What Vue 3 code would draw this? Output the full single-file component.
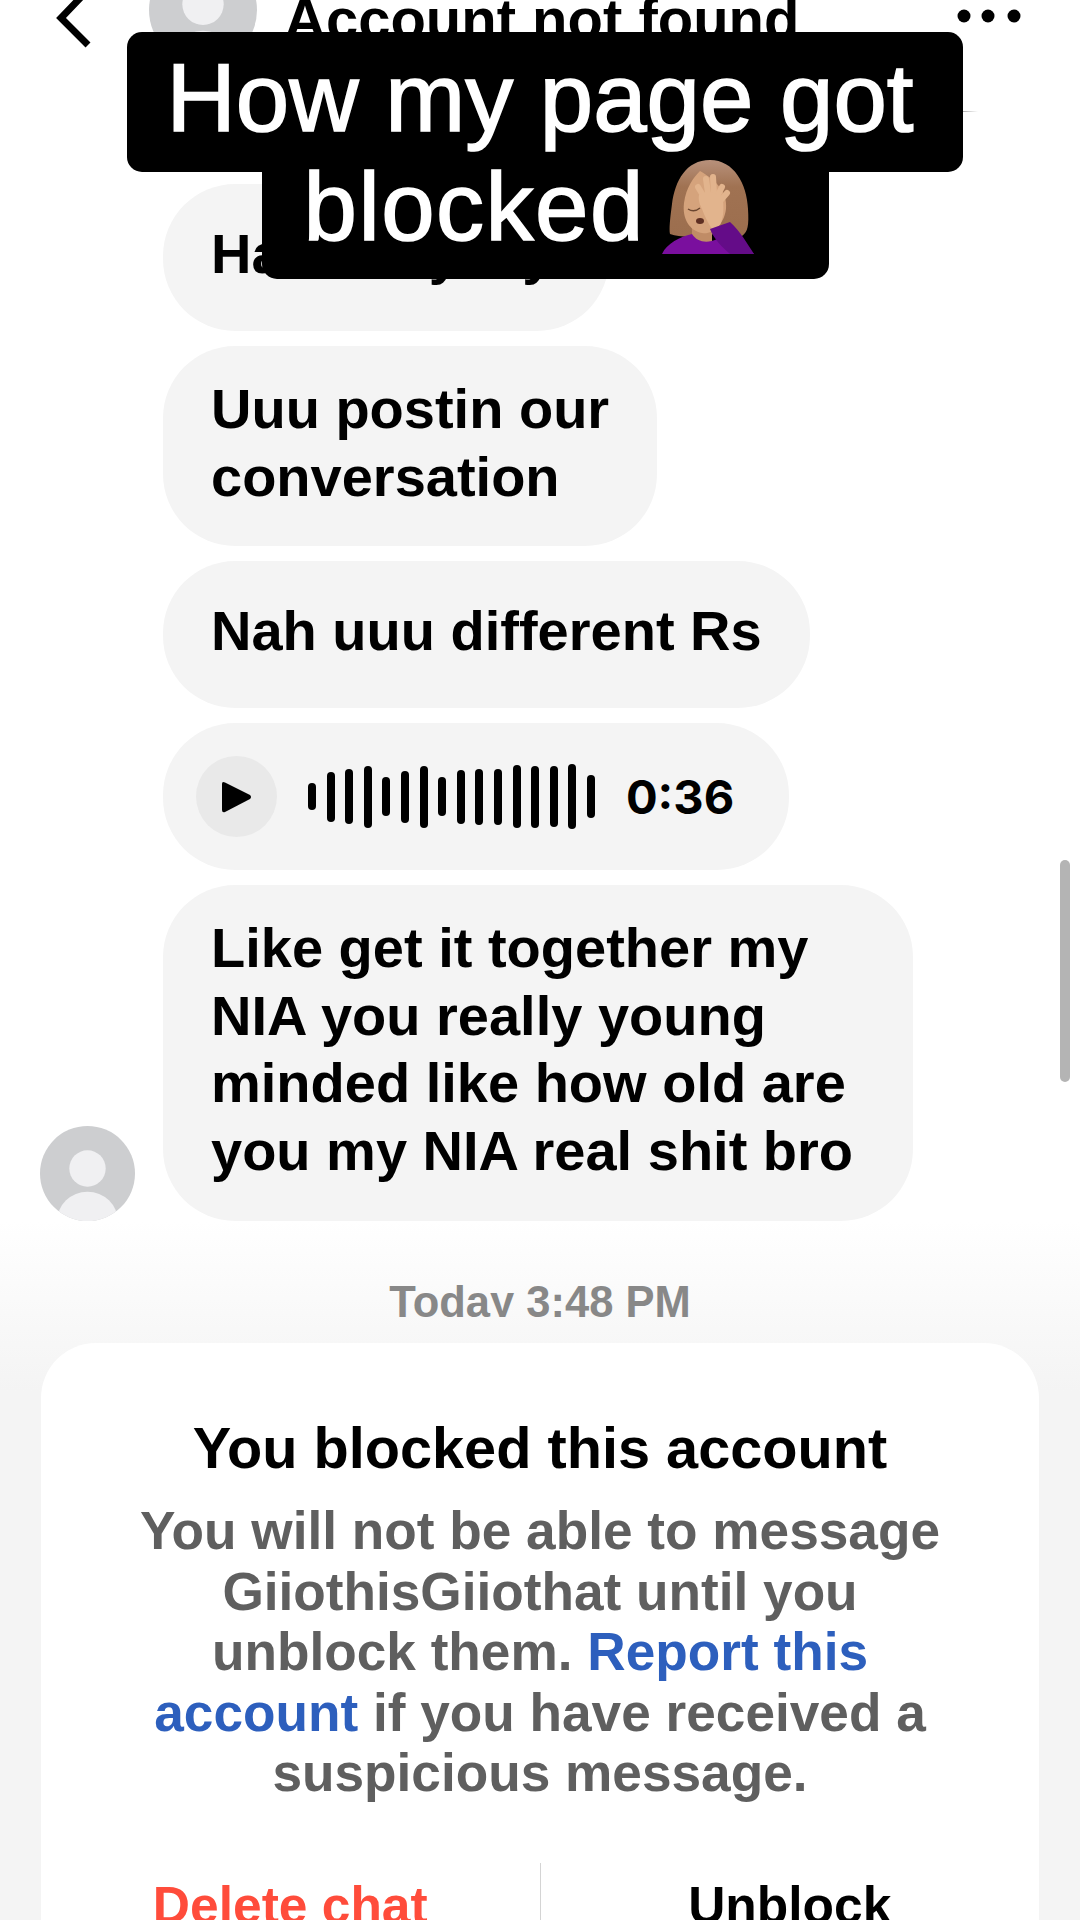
<template>
  <div class="screen">
    <header class="topbar">
      <svg class="back" width="50" height="60" viewBox="0 0 50 60">
        <path d="M37 -6 L14 18 L41 45" fill="none" stroke="#000" stroke-width="7" />
      </svg>
      <svg class="top-avatar" width="108" height="108" viewBox="0 0 94 94">
        <defs>
          <clipPath id="topClip"><circle cx="47" cy="47" r="47" /></clipPath>
        </defs>
        <g clip-path="url(#topClip)">
          <rect width="94" height="94" fill="#cdced0" />
          <circle cx="47" cy="42" r="18" fill="#f0f0f2" />
          <ellipse cx="47" cy="94" rx="30" ry="29" fill="#f0f0f2" />
        </g>
      </svg>
      <div class="account-name">Account not found</div>
      <svg class="more" width="70" height="20" viewBox="0 0 70 20">
        <circle cx="9" cy="10" r="6.5" />
        <circle cx="33" cy="10" r="6.5" />
        <circle cx="59" cy="10" r="6.5" />
      </svg>
      <div class="top-rule"></div>
    </header>

    <section class="thread">
      <div v-for="msg in messages" :key="msg.id" class="row">
        <div class="avatar-slot"></div>
        <div class="bubble" :class="msg.kind">
          <div v-for="line in msg.lines" :key="line">{{ line }}</div>
        </div>
      </div>

      <div class="row voice-row">
        <div class="avatar-slot"></div>
        <div class="bubble voice">
          <div class="play">
            <svg width="30" height="34" viewBox="0 0 30 34">
              <path d="M3 2.5 L28 15 Q30 17 28 19 L3 32 Q0 33 0 30 L0 4 Q0 1 3 2.5Z" />
            </svg>
          </div>
          <div class="wave">
            <span v-for="(h, i) in waveBars" :key="i" :style="{ height: h + 'px' }"></span>
          </div>
          <div class="duration">0:36</div>
        </div>
      </div>

      <div class="row">
        <div class="avatar-slot">
          <svg width="95" height="95" viewBox="0 0 94 94">
            <defs>
              <clipPath id="lastClip"><circle cx="47" cy="47" r="47" /></clipPath>
            </defs>
            <g clip-path="url(#lastClip)">
              <rect width="94" height="94" fill="#cdced0" />
              <circle cx="47" cy="42" r="18" fill="#f0f0f2" />
              <ellipse cx="47" cy="94" rx="30" ry="29" fill="#f0f0f2" />
            </g>
          </svg>
        </div>
        <div class="bubble last">
          <div v-for="line in lastLines" :key="line">{{ line }}</div>
        </div>
      </div>
    </section>

    <section class="footer">
      <div class="stamp">Today 3:48 PM</div>
      <div class="card">
        <div class="card-title">You blocked this account</div>
        <p class="card-body">
          You will not be able to message<br />
          GiiothisGiiothat until you<br />
          unblock them. <span class="link">Report this</span><br />
          <span class="link">account</span> if you have received a<br />
          suspicious message.
        </p>
        <div class="actions">
          <div class="action danger">Delete chat</div>
          <div class="action">Unblock</div>
        </div>
      </div>
    </section>

    <div class="scrollbar"></div>

    <div class="caption">
      <div class="caption-line first">How my page got</div>
      <div class="caption-line second">
        <span class="blocked">blocked</span>
        <svg class="emoji" width="94" height="96" viewBox="0 0 94 96">
          <defs>
            <linearGradient id="hair" x1="0" y1="0" x2="0" y2="1">
              <stop offset="0" stop-color="#b8917b" />
              <stop offset="0.35" stop-color="#a07252" />
              <stop offset="1" stop-color="#9c6e4e" />
            </linearGradient>
          </defs>
          <path d="M48 1 C24 1 13 22 10 45 C8 60 7 70 8 75 C20 79 35 78 45 75 L80 77 C86 73 87 66 86 50 C85 25 72 1 48 1Z" fill="url(#hair)" />
          <path d="M30 68 L50 72 L50 84 L30 84Z" fill="#c08c66" />
          <path d="M22 44 C24 28 32 18 38 12 C52 20 66 32 64 50 C62 66 50 76 40 74 C28 72 20 60 22 44Z" fill="#d5a37c" />
          <path d="M26 50 Q32 54 38 49" fill="none" stroke="#6a4630" stroke-width="1.5" />
          <ellipse cx="38" cy="62" rx="4" ry="3" fill="#5e2f22" />
          <path d="M0 95 C5 84 18 78 30 75 C35 83 45 85 55 80 L70 75 L92 95Z" fill="#7a0f9e" />
          <g stroke="#e2b48d" stroke-width="6" stroke-linecap="round" fill="none">
            <path d="M42 38 L36 28" />
            <path d="M46 34 L44 20" />
            <path d="M52 34 L51 18" />
            <path d="M56 36 L60 28" />
            <path d="M58 42 L65 34" />
          </g>
          <path d="M37 36 C44 31 56 33 61 41 C62 52 61 60 58 66 L50 70 C46 64 42 56 40 50 C38 46 36 41 37 36Z" fill="#e2b48d" />
          <path d="M48 70 L68 63 C78 72 85 84 92 95 L68 95 C60 88 52 80 48 70Z" fill="#640c88" />
        </svg>
      </div>
    </div>
  </div>
</template>

<script setup>
const messages = [
  { id: 1, lines: ['Hahaha yeay'], kind: 'first-msg' },
  { id: 2, lines: ['Uuu postin our', 'conversation'] },
  { id: 3, lines: ['Nah uuu different Rs'] }
]

const lastLines = [
  'Like get it together my',
  'NIA you really young',
  'minded like how old are',
  'you my NIA real shit bro'
]

const waveBars = [27, 50, 55, 62, 39, 52, 62, 39, 54, 56, 56, 63, 62, 61, 65, 43]
</script>

<style>
html,
body {
  background: #fff;
}
</style>

<style scoped>
.screen {
  position: relative;
  width: 1080px;
  height: 1920px;
  overflow: hidden;
  background: #fff;
  font-family: "Liberation Sans", Arial, sans-serif;
  font-weight: 700;
  color: #000;
}

.topbar {
  position: relative;
  display: flex;
  align-items: flex-start;
  height: 184px;
  padding-left: 47px;
  box-sizing: border-box;
}

.back {
  flex: none;
  overflow: visible;
}

.top-avatar {
  flex: none;
  margin: -44px 0 0 52px;
}

.account-name {
  margin: -14px 0 0 27px;
  font-size: 58px;
  line-height: 66px;
  white-space: nowrap;
}

.more {
  flex: none;
  margin: 6px 0 0 156px;
}

.top-rule {
  position: absolute;
  top: 111px;
  left: 940px;
  width: 38px;
  height: 1px;
  background: linear-gradient(90deg, #333, rgba(0, 0, 0, 0));
}

.thread {
  display: flex;
  flex-direction: column;
  gap: 15px;
}

.row {
  display: flex;
  align-items: flex-end;
  gap: 28px;
  padding-left: 40px;
}

.avatar-slot {
  flex: none;
  width: 95px;
  height: 95px;
}

.bubble {
  display: flex;
  flex-direction: column;
  justify-content: center;
  box-sizing: border-box;
  min-height: 147px;
  padding: 29px 48px 36px 48px;
  border-radius: 72px;
  background: #f4f4f4;
  font-size: 56px;
  line-height: 67.5px;
  white-space: nowrap;
}

.first-msg {
  padding-right: 56px;
}

.last {
  padding-right: 60px;
  padding-bottom: 37px;
}

.voice {
  flex-direction: row;
  align-items: center;
  padding: 0 55px 0 33px;
}

.play {
  display: flex;
  align-items: center;
  justify-content: center;
  width: 81px;
  height: 81px;
  border-radius: 50%;
  background: #e9e9e9;
}

.wave {
  display: flex;
  align-items: center;
  gap: 10.6px;
  margin: 0 31px;
}

.wave span {
  width: 8px;
  border-radius: 4px;
  background: #000;
}

.duration {
  font-family: Inter, "Liberation Sans", sans-serif;
  font-size: 47px;
  line-height: 50px;
}

.footer {
  display: flex;
  flex-direction: column;
  align-items: center;
  height: 699px;
  background: linear-gradient(180deg, #fff 0, #f4f4f4 170px);
}

.stamp {
  flex: none;
  height: 39px;
  margin-top: 57px;
  overflow: hidden;
  color: #888;
  font-size: 43.5px;
  line-height: 48px;
}

.card {
  flex: 1;
  min-height: 0;
  box-sizing: border-box;
  width: 998px;
  margin-top: 26px;
  padding-top: 72px;
  border-radius: 55px 55px 0 0;
  background: #fff;
  text-align: center;
}

.card-title {
  font-size: 57.7px;
  line-height: 67px;
}

.card-body {
  margin: 19px 0 0;
  color: #5f5f5f;
  font-size: 53.2px;
  line-height: 60.6px;
}

.link {
  color: #2d5fbd;
}

.actions {
  display: flex;
  margin-top: 59px;
}

.action {
  flex: 1;
  padding-top: 12px;
  font-size: 51.5px;
  line-height: 60px;
}

.action + .action {
  border-left: 1px solid #d4d4d4;
}

.danger {
  color: #ff4c3b;
}

.scrollbar {
  position: absolute;
  top: 860px;
  left: 1060px;
  width: 10px;
  height: 222px;
  border-radius: 5px;
  background: #b4b4b4;
}

.caption {
  position: absolute;
  top: 32px;
  left: 127px;
  display: flex;
  flex-direction: column;
  align-items: center;
  width: 836px;
  color: #fff;
  font-weight: 400;
  font-size: 96px;
  white-space: nowrap;
  -webkit-text-stroke: 1.6px #fff;
}

.caption-line {
  box-sizing: border-box;
  background: #000;
}

.first {
  width: 836px;
  height: 140px;
  padding: 10px 10px 0 0;
  border-radius: 15px;
  line-height: 111px;
  text-align: center;
}

.second {
  display: flex;
  align-items: flex-start;
  gap: 17px;
  width: 567px;
  height: 107px;
  padding-left: 42px;
  border-radius: 0 0 15px 15px;
  line-height: 70px;
}

.blocked {
  letter-spacing: 1.5px;
}

.emoji {
  flex: none;
  margin-top: -13px;
}
</style>
